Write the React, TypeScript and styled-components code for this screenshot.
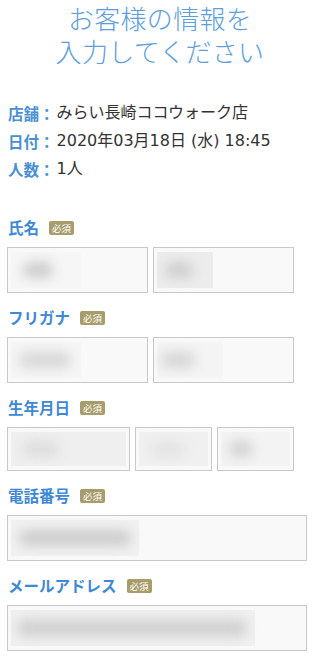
import React from "react";
import styled, { createGlobalStyle } from "styled-components";

const Global = createGlobalStyle`
  html, body { margin: 0; padding: 0; background: #fff; }
  body { font-family: "DejaVu Sans", "Noto Sans CJK JP", sans-serif; color: #333; }
`;

const Page = styled.div`
  width: 320px;
  padding-bottom: 6px;
`;

const Title = styled.h1`
  margin: 0;
  padding-top: 1px;
  font-family: "Noto Sans CJK JP", sans-serif;
  font-size: 26px;
  line-height: 33px;
  font-weight: 300;
  text-align: center;
  color: #5d9edb;
  letter-spacing: 0.3px;
`;

const Info = styled.dl`
  margin: 32px 0 0 8px;
  font-size: 16px;
  line-height: 28px;
`;

const InfoRow = styled.div`
  display: flex;
`;

const InfoLabel = styled.dt`
  font-family: "Noto Sans CJK JP", sans-serif;
  font-size: 15.5px;
  font-weight: 700;
  color: #4a8fd3;
`;

const InfoValue = styled.dd`
  margin: 0 0 0 2px;
  color: #333;
`;

const Form = styled.div`
  margin: 34px 0 0 7px;
  width: 300px;
`;

const Group = styled.div`
  & + & { margin-top: 14px; }
`;

const LabelRow = styled.div`
  display: flex;
  align-items: center;
  height: 20px;
  margin: 0 0 10px 1px;
  gap: 10px;
`;

const Label = styled.span`
  font-family: "Noto Sans CJK JP", sans-serif;
  font-size: 15.5px;
  font-weight: 700;
  color: #3f88d4;
  line-height: 20px;
`;

const Badge = styled.span`
  display: inline-block;
  font-family: "Noto Sans CJK JP", sans-serif;
  background: #a89c6b;
  color: #fff;
  font-size: 9.5px;
  line-height: 14px;
  padding: 0 3px;
  border-radius: 2px;
  margin-top: 2px;
`;

const Row = styled.div`
  display: flex;
  gap: 5px;
`;

const Field = styled.div<{ $w: number; $h?: number }>`
  box-sizing: border-box;
  width: ${(p) => p.$w}px;
  height: ${(p) => p.$h ?? 46}px;
  border: 1px solid #c8c8c8;
  background: #f9f9f9;
  padding: 4px 3px;
  display: flex;
  align-items: stretch;
  overflow: hidden;
`;

const Mask = styled.div<{ $w: number; $tone: string }>`
  width: ${(p) => p.$w}px;
  background: ${(p) => p.$tone};
  display: flex;
  align-items: center;
`;

const Blob = styled.div<{ $w: number; $left: number; $c: string }>`
  width: ${(p) => p.$w}px;
  height: 16px;
  margin-left: ${(p) => p.$left}px;
  border-radius: 8px;
  background: ${(p) => p.$c};
  filter: blur(6px);
`;

type Spec = { w: number; h?: number; mask: number; tone: string; blob: number; left: number; c: string };

const Input = ({ s }: { s: Spec }) => (
  <Field $w={s.w} $h={s.h}>
    <Mask $w={s.mask} $tone={s.tone}>
      <Blob $w={s.blob} $left={s.left} $c={s.c} />
    </Mask>
  </Field>
);

const fields: { label: string; inputs: Spec[] }[] = [
  {
    label: "氏名",
    inputs: [
      { w: 141, mask: 70, tone: "#f6f6f6", blob: 30, left: 12, c: "#cdcdcd" },
      { w: 141, mask: 56, tone: "#ececec", blob: 28, left: 8, c: "#cfcfcf" },
    ],
  },
  {
    label: "フリガナ",
    inputs: [
      { w: 141, mask: 70, tone: "#f5f5f5", blob: 52, left: 8, c: "#d8d8d8" },
      { w: 141, mask: 66, tone: "#f4f4f4", blob: 34, left: 4, c: "#d6d6d6" },
    ],
  },
  {
    label: "生年月日",
    inputs: [
      { w: 123, h: 44, mask: 116, tone: "#efefef", blob: 36, left: 12, c: "#dddddd" },
      { w: 77, h: 44, mask: 70, tone: "#f0f0f0", blob: 34, left: 12, c: "#e4e4e4" },
      { w: 77, h: 44, mask: 70, tone: "#f3f3f3", blob: 24, left: 8, c: "#d3d3d3" },
    ],
  },
  {
    label: "電話番号",
    inputs: [{ w: 300, mask: 128, tone: "#f1f1f1", blob: 112, left: 8, c: "#cdcdcd" }],
  },
  {
    label: "メールアドレス",
    inputs: [{ w: 300, mask: 244, tone: "#f0f0f0", blob: 230, left: 6, c: "#cfcfcf" }],
  },
];

export default function App() {
  return (
    <Page>
      <Global />
      <Title>
        お客様の情報を
        <br />
        入力してください
      </Title>
      <Info>
        <InfoRow>
          <InfoLabel>店舗：</InfoLabel>
          <InfoValue>みらい長崎ココウォーク店</InfoValue>
        </InfoRow>
        <InfoRow>
          <InfoLabel>日付：</InfoLabel>
          <InfoValue>2020年03月18日 (水) 18:45</InfoValue>
        </InfoRow>
        <InfoRow>
          <InfoLabel>人数：</InfoLabel>
          <InfoValue>1人</InfoValue>
        </InfoRow>
      </Info>
      <Form>
        {fields.map((f) => (
          <Group key={f.label}>
            <LabelRow>
              <Label>{f.label}</Label>
              <Badge>必須</Badge>
            </LabelRow>
            <Row>
              {f.inputs.map((s, i) => (
                <Input key={i} s={s} />
              ))}
            </Row>
          </Group>
        ))}
      </Form>
    </Page>
  );
}
